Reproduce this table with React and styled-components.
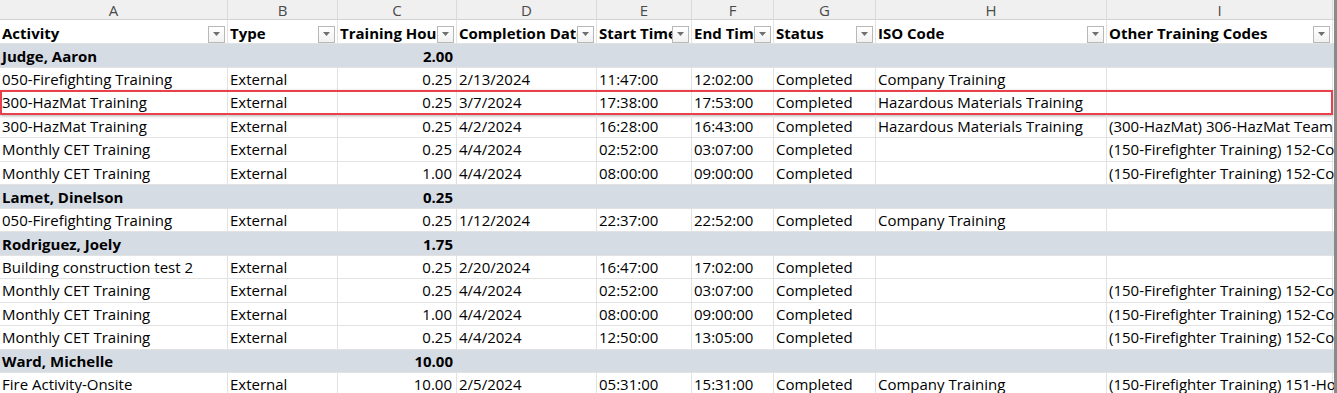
import React from 'react';
import styled, { createGlobalStyle } from 'styled-components';

const COLS = '228px 110px 119px 140px 95px 82px 102px 231px 226px';

const letters = ['A', 'B', 'C', 'D', 'E', 'F', 'G', 'H', 'I'];

const headers = [
  'Activity',
  'Type',
  'Training Hours',
  'Completion Date',
  'Start Time',
  'End Time',
  'Status',
  'ISO Code',
  'Other Training Codes',
];

const groups = [
  {
    name: 'Judge, Aaron',
    total: '2.00',
    rows: [
      ['050-Firefighting Training', 'External', '0.25', '2/13/2024', '11:47:00', '12:02:00', 'Completed', 'Company Training', ''],
      ['300-HazMat Training', 'External', '0.25', '3/7/2024', '17:38:00', '17:53:00', 'Completed', 'Hazardous Materials Training', '', true],
      ['300-HazMat Training', 'External', '0.25', '4/2/2024', '16:28:00', '16:43:00', 'Completed', 'Hazardous Materials Training', '(300-HazMat) 306-HazMat Team Training'],
      ['Monthly CET Training', 'External', '0.25', '4/4/2024', '02:52:00', '03:07:00', 'Completed', '', '(150-Firefighter Training) 152-Company Training'],
      ['Monthly CET Training', 'External', '1.00', '4/4/2024', '08:00:00', '09:00:00', 'Completed', '', '(150-Firefighter Training) 152-Company Training'],
    ],
  },
  {
    name: 'Lamet, Dinelson',
    total: '0.25',
    rows: [
      ['050-Firefighting Training', 'External', '0.25', '1/12/2024', '22:37:00', '22:52:00', 'Completed', 'Company Training', ''],
    ],
  },
  {
    name: 'Rodriguez, Joely',
    total: '1.75',
    rows: [
      ['Building construction test 2', 'External', '0.25', '2/20/2024', '16:47:00', '17:02:00', 'Completed', '', ''],
      ['Monthly CET Training', 'External', '0.25', '4/4/2024', '02:52:00', '03:07:00', 'Completed', '', '(150-Firefighter Training) 152-Company Training'],
      ['Monthly CET Training', 'External', '1.00', '4/4/2024', '08:00:00', '09:00:00', 'Completed', '', '(150-Firefighter Training) 152-Company Training'],
      ['Monthly CET Training', 'External', '0.25', '4/4/2024', '12:50:00', '13:05:00', 'Completed', '', '(150-Firefighter Training) 152-Company Training'],
    ],
  },
  {
    name: 'Ward, Michelle',
    total: '10.00',
    rows: [
      ['Fire Activity-Onsite', 'External', '10.00', '2/5/2024', '05:31:00', '15:31:00', 'Completed', 'Company Training', '(150-Firefighter Training) 151-Hose Training'],
    ],
  },
];

export default function App() {
  return (
    <>
      <GlobalStyle />
      <Window>
        <Sheet>
          <LetterRow>
            {letters.map(l => (
              <Letter key={l}>{l}</Letter>
            ))}
          </LetterRow>
          <HeaderRow>
            {headers.map(h => (
              <HeaderCell key={h}>
                <HeaderText>{h}</HeaderText>
                <FilterButton>
                  <svg width="7" height="4" viewBox="0 0 7 4">
                    <path d="M0 0h7L3.5 4z" fill="#6f6f6f" />
                  </svg>
                </FilterButton>
              </HeaderCell>
            ))}
          </HeaderRow>
          {groups.map(g => (
            <React.Fragment key={g.name}>
              <GroupRow>
                <GroupCell>{g.name}</GroupCell>
                <GroupCell />
                <GroupCell $num>{g.total}</GroupCell>
              </GroupRow>
              {g.rows.map((r, i) => (
                <Row key={i} $highlight={r[9]}>
                  <Cell>{r[0]}</Cell>
                  <Cell>{r[1]}</Cell>
                  <Cell $num>{r[2]}</Cell>
                  <Cell>{r[3]}</Cell>
                  <Cell>{r[4]}</Cell>
                  <Cell>{r[5]}</Cell>
                  <Cell>{r[6]}</Cell>
                  <Cell>{r[7]}</Cell>
                  <Cell $spill>{r[8]}</Cell>
                </Row>
              ))}
            </React.Fragment>
          ))}
        </Sheet>
        <Edge />
      </Window>
    </>
  );
}

const GlobalStyle = createGlobalStyle`
  body {
    margin: 0;
    background: #fff;
    font-family: "Open Sans", "Noto Sans", sans-serif;
    color: #000;
  }
`;

const Window = styled.div`
  display: flex;
  width: 1337px;
  height: 393px;
  overflow: hidden;
`;

const Sheet = styled.div`
  width: 1334px;
  overflow: hidden;
  font-size: 15px;
`;

const Edge = styled.div`
  width: 3px;
  background: #8a8a8a;
`;

const LetterRow = styled.div`
  display: grid;
  grid-template-columns: ${COLS};
  height: 20px;
  background: #f0f0f0;
  border-bottom: 1px solid #d2d2d2;
  box-sizing: border-box;
`;

const Letter = styled.div`
  display: flex;
  align-items: center;
  justify-content: center;
  color: #4a4a4a;
  font-size: 15px;
  border-right: 1px solid #dadada;
`;

const Row = styled.div`
  display: grid;
  grid-template-columns: ${COLS};
  height: 23.5px;
  box-sizing: border-box;
  border-bottom: 1px solid #e2e2e2;
  position: relative;

  ${p =>
    p.$highlight &&
    `
    &::after {
      content: '';
      position: absolute;
      left: 0;
      right: 1px;
      top: -1px;
      bottom: -1px;
      border: 2px solid #e8414b;
      box-shadow: 0 1px 3px rgba(0, 0, 0, 0.3);
      pointer-events: none;
    }
  `}
`;

const HeaderRow = styled(Row)`
  height: 24px;
`;

const Cell = styled.div`
  display: flex;
  align-items: center;
  justify-content: ${p => (p.$num ? 'flex-end' : 'flex-start')};
  padding: 1px ${p => (p.$num ? '4px' : '2px')} 0 2px;
  border-right: 1px solid #e2e2e2;
  white-space: nowrap;
  overflow: ${p => (p.$spill ? 'visible' : 'hidden')};
  line-height: 1;
`;

const HeaderCell = styled.div`
  display: flex;
  align-items: center;
  padding: 2px 0 0 2px;
  border-right: 1px solid #e2e2e2;
  font-weight: 700;
  overflow: hidden;
`;

const HeaderText = styled.span`
  flex: 1;
  min-width: 0;
  white-space: nowrap;
  overflow: hidden;
`;

const FilterButton = styled.div`
  flex: none;
  width: 17px;
  height: 17px;
  box-sizing: border-box;
  margin: 3px 2px 0 0;
  border: 1px solid #b8b8b8;
  background: linear-gradient(#ffffff, #f1f1f1);
  display: flex;
  align-items: center;
  justify-content: center;
`;

const GroupRow = styled.div`
  display: grid;
  grid-template-columns: 338px 0 119px;
  height: 23.5px;
  box-sizing: border-box;
  background: #d6dce4;
  border-bottom: 1px solid #e2e2e2;
`;

const GroupCell = styled.div`
  display: flex;
  align-items: center;
  justify-content: ${p => (p.$num ? 'flex-end' : 'flex-start')};
  padding: 1px ${p => (p.$num ? '4px' : '0')} 0 ${p => (p.$num ? '0' : '2px')};
  font-weight: 700;
  white-space: nowrap;
`;
